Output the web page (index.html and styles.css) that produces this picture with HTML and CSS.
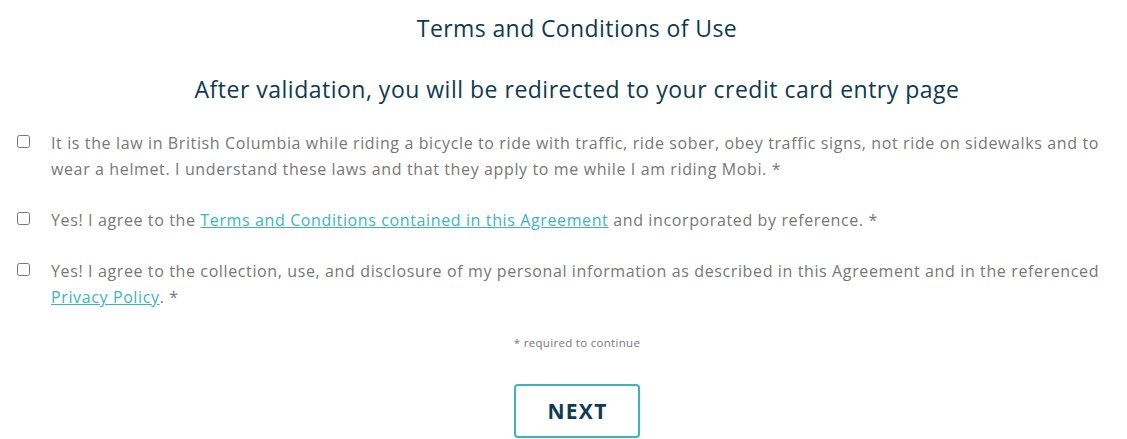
FILE: index.html
```html
<!DOCTYPE html>
<html>
<head>
<meta charset="utf-8">
<link rel="stylesheet" href="styles.css">
</head>
<body>
<div class="page">
  <h1 class="title">Terms and Conditions of Use</h1>
  <h2 class="subtitle">After validation, you will be redirected to your credit card entry page</h2>
  <div class="items">
    <label class="item">
      <input type="checkbox" class="box">
      <span class="text">It is the law in British Columbia while riding a bicycle to ride with traffic, ride sober, obey traffic signs, not ride on sidewalks and to wear a helmet. I understand these laws and that they apply to me while I am riding Mobi. *</span>
    </label>
    <label class="item">
      <input type="checkbox" class="box">
      <span class="text">Yes! I agree to the <a href="#" class="link">Terms and Conditions contained in this Agreement</a> and incorporated by reference. *</span>
    </label>
    <label class="item">
      <input type="checkbox" class="box">
      <span class="text">Yes! I agree to the collection, use, and disclosure of my personal information as described in this Agreement and in the referenced <a href="#" class="link">Privacy Policy</a>. *</span>
    </label>
  </div>
  <p class="required">* required to continue</p>
  <div class="actions"><button class="next">NEXT</button></div>
</div>
</body>
</html>
```
FILE: styles.css
```css
html, body { margin: 0; padding: 0; background: #fff; }
body { font-family: "Open Sans", "Liberation Sans", sans-serif; }
.page { padding: 13px 0 0 0; }
.title { margin: 0; padding-left: 27px; text-align: center; font-size: 23px; font-weight: 400; letter-spacing: 0.4px; color: #0e3a53; line-height: 30px; }
.subtitle { margin: 31px 0 0 0; padding-left: 27px; text-align: center; font-size: 23px; font-weight: 400; letter-spacing: 0.5px; color: #0e3a53; line-height: 30px; }
.items { margin-top: 26px; padding: 0 17px; }
.item { display: flex; align-items: flex-start; margin-bottom: 25px; }
.box { width: 13px; height: 13px; margin: 5px 21px 0 0; flex: none; }
.text { font-size: 16px; line-height: 26px; letter-spacing: 0.62px; color: #777; }
.link { color: #3cb4c0; text-decoration: underline; }
.required { margin: 20px 0 0 0; padding-left: 27px; text-align: center; font-size: 11.5px; letter-spacing: 0.3px; color: #777; }
.actions { display: flex; justify-content: center; margin-top: 34px; padding-left: 27px; }
.next { width: 126px; height: 54px; border: 2px solid #3cb4c0; border-radius: 4px; background: #fff; color: #0e3a53; font-family: inherit; font-size: 21px; font-weight: 700; letter-spacing: 1.3px; padding: 0 0 0 1px; }
```
